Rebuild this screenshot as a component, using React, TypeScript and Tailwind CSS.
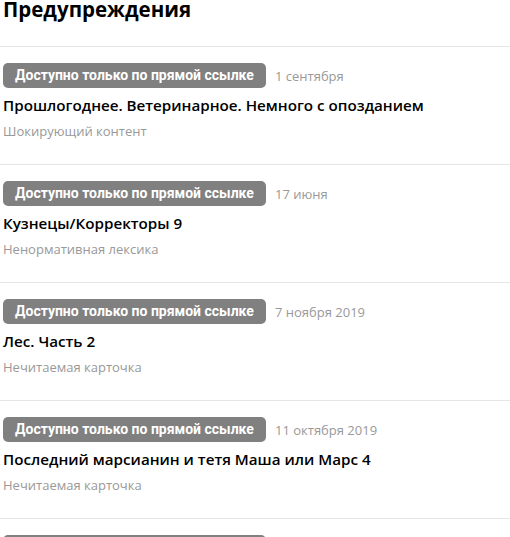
import React from "react";

const items = [
  { date: "1 сентября", title: "Прошлогоднее. Ветеринарное. Немного с опозданием", sub: "Шокирующий контент" },
  { date: "17 июня", title: "Кузнецы/Корректоры 9", sub: "Ненормативная лексика" },
  { date: "7 ноября 2019", title: "Лес. Часть 2", sub: "Нечитаемая карточка" },
  { date: "11 октября 2019", title: "Последний марсианин и тетя Маша или Марс 4", sub: "Нечитаемая карточка" },
  { date: "", title: "", sub: "" },
];

export default function App() {
  return (
    <div className="w-[510px] h-[537px] overflow-hidden bg-white" style={{ fontFamily: '"Open Sans", "Noto Sans", sans-serif' }}>
      <div className="h-[47px] border-b border-[#e6e6e6] pl-[3px]">
        <h1 className="text-[20.5px] leading-[19px] font-bold text-black">Предупреждения</h1>
      </div>
      {items.map((it, i) => (
        <div key={i} className="border-b border-[#e6e6e6] pt-[16px] pb-[24px] pl-[3px]">
          <div className="flex items-center">
            <span
              className="h-[25px] w-[263px] rounded-[5px] bg-[#808080] text-white text-[14px] font-bold flex items-center justify-center"
              style={{ fontFamily: 'Roboto, "Open Sans", sans-serif' }}
            >
              Доступно только по прямой ссылке
            </span>
            <span className="ml-[9px] text-[13px] leading-[18px] pt-[1px] text-[#999999]">{it.date}</span>
          </div>
          <div className="mt-[7px] text-[15.2px] leading-[20px] font-semibold text-black">{it.title}</div>
          <div className="mt-[7px] text-[13px] leading-[18px] text-[#999999]">{it.sub}</div>
        </div>
      ))}
    </div>
  );
}
